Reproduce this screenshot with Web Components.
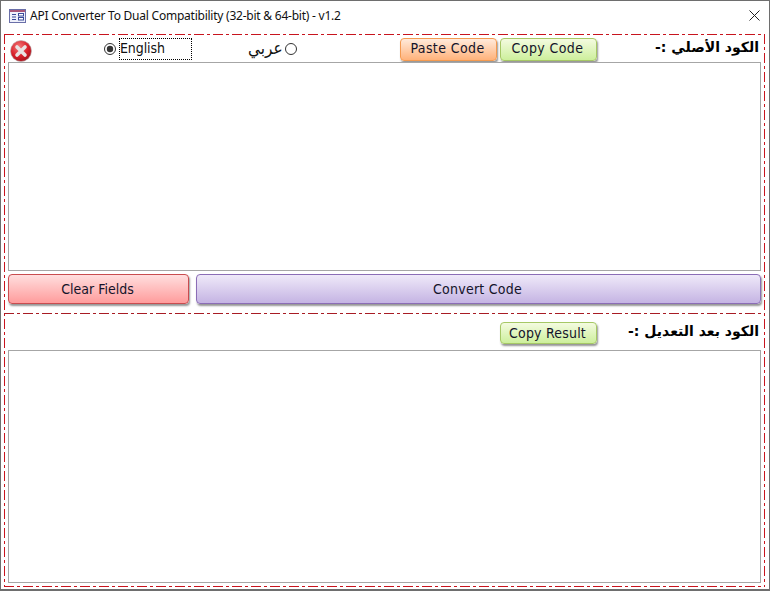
<!DOCTYPE html>
<html><head><meta charset="utf-8">
<style>
html,body{margin:0;padding:0;background:#fff;}
body{font-family:"Noto Sans","DejaVu Sans",sans-serif;}
</style></head>
<body>
<app-window>
  <title-bar slot="title">API Converter To Dual Compatibility (32-bit &amp; 64-bit) - v1.2</title-bar>
  <dash-frame>
    <tool-row style="height:27px">
      <error-icon style="margin-left:2px"></error-icon>
      <radio-opt checked focus style="margin-left:72px;width:88px">English</radio-opt>
      <radio-opt rtl style="margin-left:56px;width:49px">عربي</radio-opt>
      <glossy-btn kind="orange" style="margin-left:103px;width:97px;height:23px;margin-top:3px;letter-spacing:.4px;padding-bottom:3px">Paste Code</glossy-btn>
      <glossy-btn kind="green" style="margin-left:3px;width:97px;height:23px;margin-top:3px;letter-spacing:.4px;padding-bottom:3px">Copy Code</glossy-btn>
      <ar-label style="padding-top:2px">الكود الأصلي :-</ar-label>
    </tool-row>
    <code-box style="height:209px"></code-box>
    <tool-row style="height:30px;margin-top:3px;margin-bottom:9px">
      <glossy-btn kind="red" style="width:181px;height:30px">Clear Fields</glossy-btn>
      <glossy-btn kind="purple" style="margin-left:7px;flex:1;height:30px;letter-spacing:.25px">Convert Code</glossy-btn>
    </tool-row>
    <dash-rule></dash-rule>
    <tool-row style="height:36px">
      <glossy-btn kind="green" style="margin-left:492px;width:97px;height:22px;margin-top:8px;letter-spacing:.2px">Copy Result</glossy-btn>
      <ar-label style="padding-top:7px">الكود بعد التعديل :-</ar-label>
    </tool-row>
    <code-box style="height:233px"></code-box>
  </dash-frame>
</app-window>
<script>
const DASH='repeating-linear-gradient(DIR,#c8141e 0 10px,transparent 10px 13px,#c8141e 13px 16px,transparent 16px 19px)';
function def(name,html){
  customElements.define(name,class extends HTMLElement{
    constructor(){super();this.attachShadow({mode:'open'}).innerHTML=typeof html==='function'?html(this):html;}
  });
}
def('app-window',`<style>:host{display:flex;flex-direction:column;width:770px;height:591px;box-sizing:border-box;border:1px solid #6e6e6e;border-width:1px 1px 2px 1px;background:#fff;overflow:hidden}</style><slot name="title"></slot><slot></slot>`);
def('title-bar',`<style>:host{display:flex;align-items:center;height:33px;box-sizing:border-box;padding:0 0 4px 8px;font:12px/16px "Noto Sans",sans-serif;color:#111;flex:none}
.t{margin-left:4px;flex:1;white-space:nowrap;letter-spacing:-.235px}
svg{display:block}.x{margin-right:9px}</style>
<svg width="17" height="14" viewBox="0 0 17 14"><rect x=".5" y=".5" width="16" height="13" fill="#eef0fb" stroke="#6a6fa8"/><rect x="1" y="1" width="15" height="2" fill="#a8567a"/><path d="M3 5.5h4M3 8h4M3 10.5h4" stroke="#3a4a9a"/><rect x="9.5" y="4.5" width="5" height="2.5" fill="#fff" stroke="#3a4a9a"/><rect x="9.5" y="8.5" width="5" height="2.5" fill="#fff" stroke="#3a4a9a"/></svg>
<span class="t"><slot></slot></span>
<svg class="x" width="11" height="11" viewBox="0 0 11 11"><path d="M.5.5l10 10M10.5.5l-10 10" stroke="#222" stroke-width="1" fill="none"/></svg>`);
def('dash-frame',`<style>:host{display:flex;flex-direction:column;flex:none;box-sizing:border-box;width:761px;height:553px;margin-left:3px;padding:1px 4px 1px 4px;
background:${DASH.replace('DIR','90deg')} 0 0/100% 1px no-repeat,${DASH.replace('DIR','90deg')} 0 100%/100% 1px no-repeat,${DASH.replace('DIR','180deg')} 0 0/1px 100% no-repeat,${DASH.replace('DIR','180deg')} 100% 0/1px 100% no-repeat}</style><slot></slot>`);
def('dash-rule',`<style>:host{display:block;height:1px;flex:none;margin:0 -4px;background:${DASH.replace('DIR','90deg').replace(/#c8141e/g,'#a81c24')}}</style>`);
def('tool-row',`<style>:host{display:flex;align-items:flex-start;flex:none}</style><slot></slot>`);
def('code-box',`<style>:host{display:block;flex:none;box-sizing:border-box;border:1px solid #a6a6a6;background:#fff}</style>`);
def('error-icon',`<style>:host{display:block;width:22px;height:22px;flex:none;margin-top:5px}svg{display:block}</style>
<svg width="22" height="22" viewBox="0 0 22 22"><defs><radialGradient id="g" cx=".4" cy=".3" r=".8"><stop offset="0" stop-color="#f47a7a"/><stop offset=".55" stop-color="#d8202a"/><stop offset="1" stop-color="#9c0f18"/></radialGradient></defs>
<circle cx="11" cy="11" r="10.5" fill="url(#g)" stroke="#b8b8b8" stroke-width=".6"/>
<path d="M7 7l8 8M15 7l-8 8" stroke="#e9e3e3" stroke-width="3.6" stroke-linecap="round"/></svg>`);
def('radio-opt',h=>{const rtl=h.hasAttribute('rtl'),c=h.hasAttribute('checked'),f=h.hasAttribute('focus');
return `<style>:host{display:flex;align-items:center;flex:none;box-sizing:border-box;height:22px;margin-top:3px;font:${rtl?'17px':'14px'}/20px "DejaVu Sans Condensed","DejaVu Sans",sans-serif;color:#111;${rtl?'flex-direction:row-reverse;justify-content:flex-end;':''}}
svg{display:block;flex:none}
.l{box-sizing:border-box;height:22px;line-height:${rtl?'20px':'21px'};${f?'outline:1px dotted #000;outline-offset:-1px;flex:1;padding-left:1px;margin-left:3px;letter-spacing:-.1px;':''}${rtl?'width:34px;text-align:right;margin-right:3px;white-space:nowrap;':''}}
</style>
<svg width="12" height="12" viewBox="0 0 12 12"><circle cx="6" cy="6" r="5.5" fill="#fff" stroke="#333"/>${c?'<circle cx="6" cy="6" r="3.2" fill="#333"/>':''}</svg><span class="l"><slot></slot></span>`});
const KINDS={orange:['#ffeadb','#ffb27a','#f49a50'],green:['#f4fbe0','#cdef9c','#a6c865'],red:['#ffdede','#ff9c9c','#c94c4f'],purple:['#efe9f9','#c5b4e3','#8b6db6']};
def('glossy-btn',h=>{const k=KINDS[h.getAttribute('kind')];
return `<style>:host{display:flex;align-items:center;justify-content:center;flex:none;box-sizing:border-box;padding-right:2px;border:1px solid ${k[2]};border-radius:4px;background:linear-gradient(${k[0]},${k[1]});box-shadow:1px 2px 2px rgba(0,0,0,.42);font:14px/18px "DejaVu Sans Condensed","DejaVu Sans",sans-serif;color:#14142a;white-space:nowrap}</style><slot></slot>`});
def('ar-label',`<style>:host{display:block;flex:1;text-align:right;direction:rtl;padding:1px 2px 0 0;font:bold 14px/20px "DejaVu Sans",sans-serif;color:#000;white-space:nowrap}</style><slot></slot>`);
</script>
</body></html>
